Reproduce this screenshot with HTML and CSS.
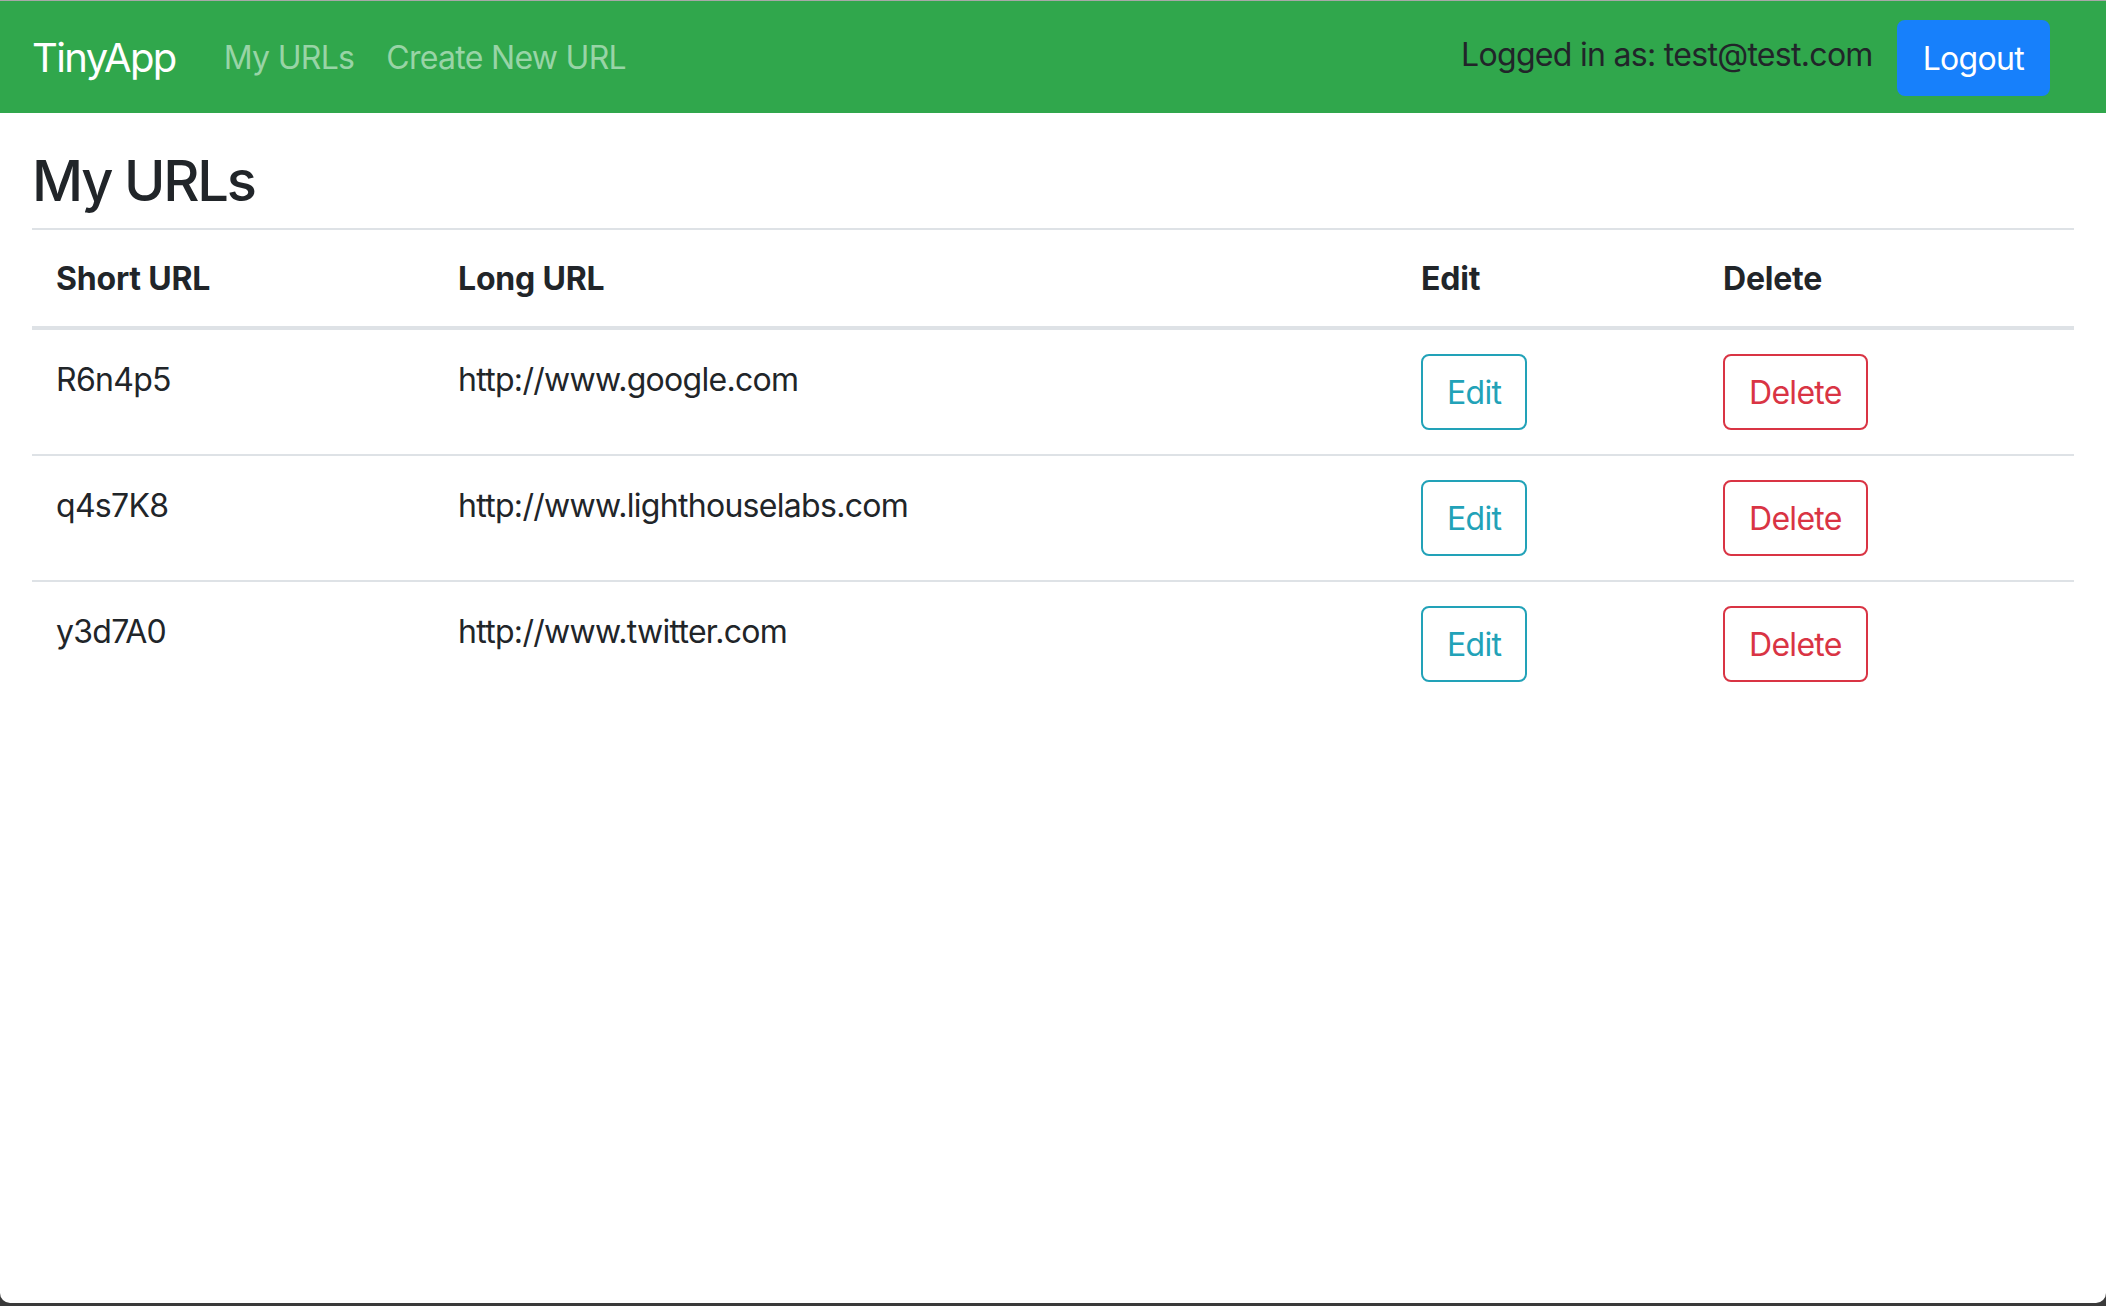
FILE: index.html
```html
<!DOCTYPE html>
<html lang="en">
<head>
<meta charset="utf-8">
<title>TinyApp</title>
<link rel="stylesheet" href="styles.css">
</head>
<body>
<div class="window">
  <nav class="navbar">
    <a class="brand" href="#">TinyApp</a>
    <ul class="nav-links">
      <li><a href="#">My URLs</a></li>
      <li><a href="#">Create New URL</a></li>
    </ul>
    <div class="nav-right">
      <span class="logged">Logged in as: test@test.com</span>
      <button class="btn btn-primary">Logout</button>
    </div>
  </nav>
  <main class="content">
    <h2 class="title">My URLs</h2>
    <table class="table">
      <thead>
        <tr>
          <th class="c1">Short URL</th>
          <th class="c2">Long URL</th>
          <th class="c3">Edit</th>
          <th class="c4">Delete</th>
        </tr>
      </thead>
      <tbody>
        <tr>
          <td>R6n4p5</td>
          <td>http://www.google.com</td>
          <td><button class="btn btn-edit">Edit</button></td>
          <td><button class="btn btn-delete">Delete</button></td>
        </tr>
        <tr>
          <td>q4s7K8</td>
          <td>http://www.lighthouselabs.com</td>
          <td><button class="btn btn-edit">Edit</button></td>
          <td><button class="btn btn-delete">Delete</button></td>
        </tr>
        <tr>
          <td>y3d7A0</td>
          <td>http://www.twitter.com</td>
          <td><button class="btn btn-edit">Edit</button></td>
          <td><button class="btn btn-delete">Delete</button></td>
        </tr>
      </tbody>
    </table>
  </main>
</div>
</body>
</html>
```
FILE: styles.css
```css
* { box-sizing: border-box; }
html, body { margin: 0; padding: 0; height: 100%; background: #3a3a3a; }
body {
  font-family: Inter, "Noto Sans", "Liberation Sans", sans-serif;
  color: #212529;
  font-size: 32px;
  line-height: 1.5;
  letter-spacing: -0.7px;
}
.window {
  height: 1303px;
  background: #fff;
  border-top: 1px solid #a8a8a8;
  border-radius: 0 0 10px 10px;
  overflow: hidden;
}
.navbar {
  display: flex;
  align-items: center;
  height: 112px;
  padding: 2px 32px 0;
  background: #30a74c;
}
.brand {
  color: #fff;
  text-decoration: none;
  font-size: 40px;
  line-height: 60px;
  letter-spacing: -1.6px;
  margin-right: 32px;
}
.nav-links {
  display: flex;
  list-style: none;
  margin: 0;
  padding: 0;
  flex: 1;
}
.nav-links a {
  display: block;
  padding: 0 16px;
  color: #98d4a6;
  text-decoration: none;
}
.nav-right {
  display: flex;
  align-items: center;
  margin-right: 24px;
}
.logged {
  margin-right: 24px;
  margin-top: -6px;
}
.btn {
  font-family: inherit;
  font-size: 32px;
  line-height: 48px;
  letter-spacing: -0.7px;
  padding: 13px 24px 11px;
  border: 2px solid transparent;
  border-radius: 8px;
  background: transparent;
  cursor: pointer;
}
.btn-primary {
  background: #1780fb;
  border-color: #1780fb;
  color: #fff;
}
.btn-edit {
  color: #22a2b8;
  border-color: #22a2b8;
}
.btn-delete {
  color: #d93444;
  border-color: #d93444;
}
.content {
  padding: 0 32px;
}
.title {
  font-size: 56px;
  font-weight: 500;
  line-height: 72px;
  letter-spacing: -2.2px;
  margin: 32px 0 11px;
}
.table {
  width: 100%;
  border-collapse: collapse;
}
.table th, .table td {
  padding: 26px 24px 22px;
  text-align: left;
  vertical-align: top;
  border-top: 2px solid #dee2e6;
}
.table th {
  padding-top: 25px;
  padding-bottom: 23px;
}
.table td:nth-child(3), .table td:nth-child(4) {
  padding-top: 24px;
  padding-bottom: 24px;
}
.table th {
  font-weight: 700;
  letter-spacing: -0.2px;
}
.table thead th {
  border-bottom: 4px solid #dee2e6;
}
.c1 { width: 402px; }
.c2 { width: 963px; }
.c3 { width: 302px; }
```
